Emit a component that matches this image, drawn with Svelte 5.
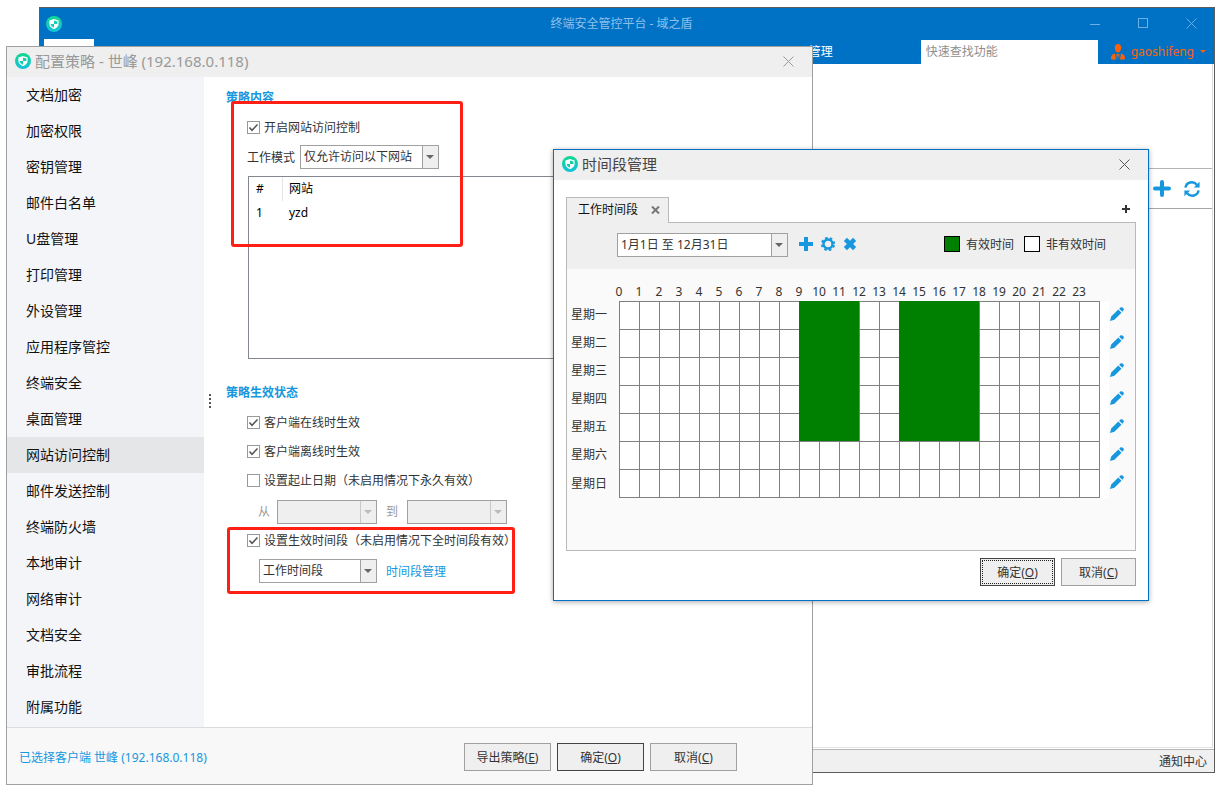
<script>
  const menu = [
    '文档加密', '加密权限', '密钥管理', '邮件白名单', 'U盘管理', '打印管理',
    '外设管理', '应用程序管控', '终端安全', '桌面管理', '网站访问控制', '邮件发送控制',
    '终端防火墙', '本地审计', '网络审计', '文档安全', '审批流程', '附属功能'
  ];
  const hours = Array.from({ length: 24 }, (_, i) => i);
  const workday = (h) => (h >= 9 && h < 12) || (h >= 14 && h < 18);

  let active = $state('网站访问控制');
  let control = $state(true);
  let online = $state(true);
  let offline = $state(true);
  let useDates = $state(false);
  let usePeriod = $state(true);
  let search = $state('');

  let week = $state(
    ['一', '二', '三', '四', '五', '六', '日'].map((d, i) => ({
      name: '星期' + d,
      slots: hours.map((h) => i < 5 && workday(h))
    }))
  );
</script>

{#snippet logo()}
  <svg class="logo" viewBox="0 0 16 16" aria-hidden="true">
    <defs>
      <linearGradient id="teal" x1="0" y1="0" x2="0" y2="1">
        <stop offset="0" stop-color="#14d88e" />
        <stop offset="1" stop-color="#12c2dc" />
      </linearGradient>
    </defs>
    <circle cx="8" cy="8" r="8" fill="url(#teal)" />
    <path d="M8 3 L12.6 4.6 V8 C12.6 10.4 10.6 12.2 8 13.2 C5.4 12.2 3.4 10.4 3.4 8 V4.6 Z" fill="#fff" />
    <path d="M8 4.4 L11.4 5.5 V8 H8 Z M8 8 V11.8 C6 11 4.8 9.8 4.6 8 Z" fill="#14cdb2" />
  </svg>
{/snippet}

{#snippet cross()}
  <svg class="cross" viewBox="0 0 11 11" aria-hidden="true">
    <path d="M0.5 0.5 L10.5 10.5 M10.5 0.5 L0.5 10.5" fill="none" stroke="currentColor" />
  </svg>
{/snippet}

{#snippet tick()}
  <svg class="tick" viewBox="0 0 13 13" aria-hidden="true">
    <path d="M2.5 6.5 L5 9.3 L10.5 3.5" fill="none" stroke="#555" stroke-width="1.5" />
  </svg>
{/snippet}

<div class="desktop">
  <div class="window main">
    <header class="banner">
      <div class="caption">
        {@render logo()}
        <h1>终端安全管控平台 - 域之盾</h1>
        <div class="controls">
          <button aria-label="最小化"><svg viewBox="0 0 11 11"><path d="M0 6.5 H10" stroke="currentColor" /></svg></button>
          <button aria-label="最大化"><svg viewBox="0 0 11 11"><rect x="0.5" y="0.5" width="9" height="9" fill="none" stroke="currentColor" /></svg></button>
          <button aria-label="关闭">{@render cross()}</button>
        </div>
      </div>
      <div class="ribbon">
        <span class="ribbon-tab"></span>
        <a class="nav" href="#manage">管理</a>
        <input class="search" type="text" placeholder="快速查找功能" aria-label="快速查找功能" bind:value={search} />
        <button class="user">
          <svg class="person" viewBox="0 0 14 16" aria-hidden="true">
            <path d="M7 0 C9.3 0 10.4 1.7 10.2 4 C10 6.7 8.6 8.6 7 8.6 C5.4 8.6 4 6.7 3.8 4 C3.6 1.7 4.7 0 7 0 Z" fill="currentColor" />
            <path d="M4 9.4 L5 15.6 H1.4 C0.4 15.6 0 15 0 14 C0 11.4 1.5 10 4 9.4 Z M10 9.4 C12.5 10 14 11.4 14 14 C14 15 13.6 15.6 12.6 15.6 H9 Z M5.4 10 L6.6 11 L6 15.6 Z M8.6 10 L7.4 11 L8 15.6 Z M5.4 10 H8.6 L7.4 11.6 H6.6 Z" fill="currentColor" />
          </svg>
          gaoshifeng
          <span class="caret"></span>
        </button>
      </div>
    </header>
    <div class="workspace">
      <div class="tools">
        <button aria-label="添加">
          <svg class="big" viewBox="0 0 18 18"><path d="M9 2 V15 M2 8.5 H16" stroke="currentColor" stroke-width="4" stroke-linecap="round" /></svg>
        </button>
        <button aria-label="刷新">
          <svg class="mid" viewBox="0 0 16 16">
            <path d="M1.4 6.6 A6.4 6.4 0 0 1 12.8 3.8 M14.6 9.4 A6.4 6.4 0 0 1 3.2 12.2" fill="none" stroke="currentColor" stroke-width="2.4" />
            <path d="M15.6 0.8 V6.6 H9.8 Z M0.4 15.2 V9.4 H6.2 Z" fill="currentColor" />
          </svg>
        </button>
      </div>
    </div>
    <footer class="status">通知中心</footer>
  </div>

  <section class="window policy" aria-labelledby="policy-title">
    <header class="titlebar faded">
      {@render logo()}
      <h2 id="policy-title">配置策略 - 世峰 (192.168.0.118)</h2>
      <button class="close" aria-label="关闭">{@render cross()}</button>
    </header>
    <div class="policy-body">
      <nav class="menu">
        {#each menu as item}
          <button class:active={item === active} onclick={() => (active = item)}>{item}</button>
        {/each}
      </nav>
      <div class="splitter"><i></i><i></i><i></i><i></i></div>
      <div class="settings">
        <h3>策略内容</h3>
        <div class="group">
          <label class="check">
            <input type="checkbox" bind:checked={control} />{@render tick()}开启网站访问控制
          </label>
          <div class="line mode">
            <label for="mode">工作模式</label>
            <span class="combo wide">
              <select id="mode"><option>仅允许访问以下网站</option></select>
            </span>
          </div>
          <div class="sites">
            <table>
              <thead>
                <tr><th>#</th><th>网站</th></tr>
              </thead>
              <tbody>
                <tr><td>1</td><td>yzd</td></tr>
              </tbody>
            </table>
          </div>
        </div>

        <h3>策略生效状态</h3>
        <div class="group">
          <label class="check">
            <input type="checkbox" bind:checked={online} />{@render tick()}客户端在线时生效
          </label>
          <label class="check">
            <input type="checkbox" bind:checked={offline} />{@render tick()}客户端离线时生效
          </label>
          <label class="check">
            <input type="checkbox" bind:checked={useDates} />{@render tick()}设置起止日期（未启用情况下永久有效）
          </label>
          <div class="line dates">
            <label for="from">从</label>
            <span class="combo date off"><select id="from" disabled={!useDates}></select></span>
            <label for="to">到</label>
            <span class="combo date off"><select id="to" disabled={!useDates}></select></span>
          </div>
          <label class="check">
            <input type="checkbox" bind:checked={usePeriod} />{@render tick()}设置生效时间段（未启用情况下全时间段有效）
          </label>
          <div class="line period">
            <span class="combo slot">
              <select aria-label="生效时间段"><option>工作时间段</option></select>
            </span>
            <a href="#period">时间段管理</a>
          </div>
        </div>
        <div class="mark mark-sites"></div>
        <div class="mark mark-period"></div>
      </div>
    </div>
    <footer class="policy-foot">
      <span>已选择客户端 世峰 (192.168.0.118)</span>
      <div class="buttons">
        <button class="btn">导出策略(<u>E</u>)</button>
        <button class="btn default">确定(<u>O</u>)</button>
        <button class="btn">取消(<u>C</u>)</button>
      </div>
    </footer>
  </section>

  <section class="window period-dialog" aria-labelledby="period-title">
    <header class="titlebar">
      {@render logo()}
      <h2 id="period-title">时间段管理</h2>
      <button class="close" aria-label="关闭">{@render cross()}</button>
    </header>
    <div class="period-body">
      <div class="tabs">
        <div class="tab">
          工作时间段
          <button aria-label="关闭标签">
            <svg class="tab-x" viewBox="0 0 9 8"><path d="M1 0.5 L8 7.5 M8 0.5 L1 7.5" stroke="currentColor" stroke-width="2" /></svg>
          </button>
        </div>
        <button class="add-tab" aria-label="添加标签">
          <svg viewBox="0 0 8 8"><path d="M4 0 V8 M0 4 H8" stroke="currentColor" stroke-width="2" /></svg>
        </button>
      </div>
      <div class="panel">
        <div class="panel-tools">
          <span class="combo range">
            <select aria-label="日期范围"><option>1月1日 至 12月31日</option></select>
          </span>
          <button aria-label="添加">
            <svg viewBox="0 0 14 14"><path d="M7 0 V14 M0 7 H14" stroke="currentColor" stroke-width="4" /></svg>
          </button>
          <button aria-label="设置">
            <svg viewBox="0 0 14 14">
              <circle cx="7" cy="7" r="4.5" fill="none" stroke="currentColor" stroke-width="2.4" />
              <circle cx="7" cy="7" r="6.2" fill="none" stroke="currentColor" stroke-width="1.8" stroke-dasharray="2.6 2.27" stroke-dashoffset="-1.13" />
            </svg>
          </button>
          <button aria-label="删除">
            <svg viewBox="0 0 14 14"><path d="M2.4 2.4 L11.6 11.6 M11.6 2.4 L2.4 11.6" stroke="currentColor" stroke-width="4.4" /></svg>
          </button>
          <div class="legend">
            <span class="swatch valid"></span>有效时间
            <span class="swatch"></span>非有效时间
          </div>
        </div>
        <table class="schedule">
          <thead>
            <tr>
              <td></td>
              {#each hours as h}
                <th scope="col"><span>{h}</span></th>
              {/each}
            </tr>
          </thead>
          <tbody>
            {#each week as day}
              <tr>
                <th scope="row">{day.name}</th>
                {#each day.slots as on}
                  <td class="cell" class:on></td>
                {/each}
                <td class="edge"></td>
                <td class="edit">
                  <button aria-label={'编辑' + day.name}>
                    <svg viewBox="0 0 14 14">
                      <path d="M0 14 L1.2 9.6 L8.3 2.6 L11.5 5.8 L4.4 12.8 Z M9.2 1.8 L10.4 0.6 C11.2 -0.1 12.2 0 13.1 0.9 C14 1.8 14.1 2.8 13.4 3.6 L12.3 4.8 Z" fill="currentColor" />
                    </svg>
                  </button>
                </td>
              </tr>
            {/each}
          </tbody>
        </table>
      </div>
      <div class="buttons">
        <button class="btn small default focused">确定(<u>O</u>)</button>
        <button class="btn small">取消(<u>C</u>)</button>
      </div>
    </div>
  </section>
</div>

<style>
  :global(body) {
    background: #fff;
  }

  .desktop {
    position: relative;
    min-height: 100vh;
    overflow: hidden;
    font: 12px/18px "Noto Sans", "Noto Sans CJK SC", sans-serif;
    color: #333;
  }

  .desktop :global(*) {
    box-sizing: border-box;
  }

  h1,
  h2,
  h3 {
    margin: 0;
    font-weight: normal;
  }

  button,
  input,
  select {
    font: inherit;
    color: inherit;
  }

  button {
    padding: 0;
    border: 0;
    background: none;
  }

  svg {
    display: block;
  }

  .window {
    position: absolute;
    display: flex;
    flex-direction: column;
    background: #fff;
  }

  .logo {
    width: 16px;
    height: 16px;
    flex: none;
  }

  .cross {
    width: 11px;
    height: 11px;
  }

  /* main window */
  .main {
    inset: 7px 9px 18px 39px;
    border: 1px solid #5c5c5c;
  }

  .banner {
    background: #0072c6;
  }

  .caption {
    display: grid;
    grid-template-columns: 1fr auto 1fr;
    align-items: center;
    height: 31px;
    padding: 0 17px 0 6px;
  }

  .caption h1 {
    font-size: 12px;
    color: #8cc0ea;
  }

  .controls {
    display: flex;
    justify-content: flex-end;
    gap: 37px;
    color: #6cafe4;
  }

  .controls svg {
    width: 11px;
    height: 11px;
  }

  .ribbon {
    display: flex;
    height: 25px;
    padding-left: 4px;
  }

  .ribbon-tab {
    width: 50px;
    background: #fff;
  }

  .nav {
    margin-left: auto;
    margin-right: 88px;
    line-height: 26px;
    color: #fff;
    text-decoration: none;
  }

  .search {
    width: 177px;
    margin-top: 1px;
    padding: 0 5px;
    border: 0;
    border-radius: 0;
    background: #fff;
  }

  .search::placeholder {
    color: #8f8f8f;
  }

  .user {
    display: flex;
    align-items: center;
    gap: 6px;
    padding: 0 8px 0 13px;
    color: #f7630c;
  }

  .person {
    width: 14px;
    height: 16px;
  }

  .caret {
    border: 3px solid transparent;
    border-top-color: currentColor;
    border-bottom: 0;
  }

  .workspace {
    flex: 1;
    margin: 0 1px 1px 0;
    padding-top: 104px;
    border-right: 1px solid #d8dadc;
    border-bottom: 1px solid #e2e2e2;
  }

  .tools {
    display: flex;
    justify-content: flex-end;
    align-items: center;
    gap: 13px;
    height: 41px;
    padding-right: 12px;
    border-top: 1px solid #b4b4b4;
    border-bottom: 1px solid #a6a6a6;
    color: #1697de;
  }

  .big {
    width: 18px;
    height: 18px;
  }

  .mid {
    width: 16px;
    height: 16px;
  }

  .status {
    height: 23px;
    padding: 3px 7px 0;
    border-top: 1px solid #b4b4b4;
    background: #f0f0f0;
    text-align: right;
  }

  /* shared dialog parts */
  .titlebar {
    display: flex;
    align-items: center;
    gap: 4px;
    height: 30px;
    padding: 0 18px 2px 8px;
    background: #efefef;
  }

  .titlebar h2 {
    font-size: 15px;
    color: #444;
  }

  .faded h2,
  .faded .close {
    color: #999;
  }

  .close {
    margin-left: auto;
    color: #555;
  }

  .combo {
    position: relative;
    display: inline-flex;
    height: 24px;
  }

  .combo select {
    width: 100%;
    padding: 0 20px 0 3px;
    border: 1px solid #a0a0a0;
    border-radius: 0;
    background: linear-gradient(#a0a0a0, #a0a0a0) right 15px top / 1px 100% no-repeat,
      linear-gradient(#efefef, #efefef) right top / 15px 100% no-repeat, #fff;
    appearance: none;
    opacity: 1;
  }

  .combo::after {
    content: "";
    position: absolute;
    right: 5px;
    top: 10px;
    border: 4px solid transparent;
    border-top-color: #666;
    border-bottom: 0;
    pointer-events: none;
  }

  .combo.off select {
    background: linear-gradient(#c8c8c8, #c8c8c8) right 15px top / 1px 100% no-repeat, #efefef;
  }

  .combo.off::after {
    border-top-color: #bbb;
  }

  .wide {
    width: 139px;
  }

  .date {
    width: 100px;
  }

  .slot {
    width: 118px;
  }

  .range {
    width: 171px;
  }

  .buttons {
    display: flex;
    gap: 6px;
  }

  .btn {
    width: 87px;
    height: 28px;
    padding-top: 1px;
    border: 1px solid #a0a0a0;
    background: #efefef;
  }

  .btn.small {
    width: 75px;
  }

  .btn.default {
    border-color: #444;
  }

  .btn.focused {
    outline: 1px dotted #222;
    outline-offset: -3px;
  }

  /* policy dialog */
  .policy {
    inset: 46px 411px auto 6px;
    border: 1px solid #a0a0a0;
  }

  .policy-body {
    display: flex;
  }

  .menu {
    display: flex;
    flex-direction: column;
    width: 197px;
    padding-bottom: 2px;
    background: #f4f5f8;
  }

  .menu button {
    height: 36px;
    padding-left: 19px;
    font-size: 14px;
    text-align: left;
    color: #111;
  }

  .menu .active {
    background: #e5e6e8;
  }

  .splitter {
    display: flex;
    flex-direction: column;
    justify-content: center;
    align-items: center;
    gap: 2px;
    width: 12px;
    padding-bottom: 2px;
  }

  .splitter i {
    width: 2px;
    height: 2px;
    background: #555;
  }

  .settings {
    position: relative;
    flex: 1;
    padding: 12px 24px 0 10px;
  }

  .settings h3 {
    font-size: 12px;
    font-weight: bold;
    color: #1697de;
  }

  .group {
    margin-bottom: 24px;
    padding: 14px 0 0 21px;
  }

  .group + h3 {
    padding-top: 1px;
  }

  .check {
    position: relative;
    display: flex;
    align-items: center;
    gap: 4px;
    height: 13px;
    white-space: nowrap;
  }

  .check + .check {
    margin-top: 16px;
  }

  .check input {
    width: 13px;
    height: 13px;
    margin: 0;
    border: 1px solid #999;
    background: #fff;
    appearance: none;
  }

  .tick {
    position: absolute;
    left: 0;
    top: 0;
    width: 13px;
    height: 13px;
    pointer-events: none;
  }

  input:not(:checked) + .tick {
    display: none;
  }

  .line {
    display: flex;
    align-items: center;
  }

  .mode {
    gap: 5px;
    margin-top: 11px;
  }

  .dates {
    margin: 13px 0 10px;
    padding-left: 11px;
    color: #999;
  }

  .dates .combo {
    margin: 0 9px 0 7px;
  }

  .dates label + .combo:last-child {
    margin-left: 9px;
  }

  .period {
    gap: 9px;
    margin-top: 12px;
    padding-left: 12px;
  }

  .mode label,
  .period a {
    padding-top: 2px;
  }

  a {
    color: #1697de;
    text-decoration: none;
  }

  .sites {
    height: 183px;
    margin: 7px 0 0 1px;
    border: 1px solid #828790;
  }

  .sites table {
    width: 100%;
    border-spacing: 0;
    color: #000;
  }

  .sites th,
  .sites td {
    height: 24px;
    padding: 0 6px;
    font-weight: normal;
    text-align: left;
  }

  .sites th:first-child,
  .sites td:first-child {
    width: 34px;
    padding-left: 7px;
  }

  .sites th:first-child {
    border-right: 1px solid #e5e5e5;
  }

  .mark {
    position: absolute;
    border: 3px solid #ff1f14;
    border-radius: 3px;
    pointer-events: none;
  }

  .mark-sites {
    left: 15px;
    top: 24px;
    width: 232px;
    height: 146px;
  }

  .mark-period {
    left: 11px;
    top: 450px;
    width: 288px;
    height: 67px;
  }

  .policy-foot {
    display: flex;
    justify-content: space-between;
    align-items: center;
    height: 57px;
    padding: 2px 75px 0 12px;
    border-top: 1px solid #dcdcdc;
    background: #f8f8f8;
  }

  .policy-foot > span {
    padding-top: 2px;
    color: #1697de;
  }

  /* time period dialog */
  .period-dialog {
    inset: 149px 75px auto 553px;
    border: 1px solid #0072c6;
    box-shadow: 0 1px 5px rgba(0, 0, 0, 0.35);
  }

  .period-body {
    padding: 17px 12px 14px;
  }

  .tabs {
    display: flex;
    justify-content: space-between;
    align-items: center;
  }

  .tab {
    display: flex;
    align-items: center;
    gap: 13px;
    height: 26px;
    margin-bottom: -1px;
    padding: 0 8px 1px 11px;
    border: 1px solid #b9b9b9;
    border-bottom: 0;
    background: #efefef;
    color: #111;
    z-index: 1;
  }

  .tab-x {
    width: 9px;
    height: 8px;
    color: #777;
  }

  .add-tab {
    margin-right: 6px;
    padding-bottom: 1px;
  }

  .add-tab svg {
    width: 8px;
    height: 8px;
  }

  .panel {
    min-height: 329px;
    margin-bottom: 7px;
    border: 1px solid #b9b9b9;
    background: #fafafa;
  }

  .panel-tools {
    display: flex;
    align-items: center;
    gap: 8px;
    height: 46px;
    padding: 0 29px 2px 50px;
    background: #efefef;
  }

  .panel-tools .combo {
    margin-right: 3px;
  }

  .panel-tools button {
    padding-bottom: 2px;
    color: #1697de;
  }

  .panel-tools svg,
  .edit svg {
    width: 14px;
    height: 14px;
  }

  .legend {
    display: flex;
    align-items: center;
    gap: 6px;
    margin-left: auto;
  }

  .swatch {
    width: 16px;
    height: 16px;
    margin-bottom: 2px;
    border: 1px solid #000;
    background: #fff;
  }

  .swatch + .swatch {
    margin-left: 4px;
  }

  .swatch.valid {
    background: #008000;
  }

  .schedule {
    margin-top: 14px;
    border-spacing: 0;
  }

  .schedule th,
  .schedule td {
    padding: 0;
    font-weight: normal;
  }

  .schedule thead th {
    height: 18px;
  }

  .schedule thead span {
    display: block;
    width: 20px;
    margin-left: -10px;
    text-align: center;
  }

  .schedule tbody th {
    min-width: 52px;
    height: 28px;
    padding-left: 4px;
    text-align: left;
  }

  .schedule tbody tr:last-child th {
    height: 29px;
  }

  .schedule .cell {
    min-width: 20px;
    border-top: 1px solid #808080;
    border-left: 1px solid #808080;
    background: #fff;
  }

  .schedule tr:last-child .cell {
    border-bottom: 1px solid #808080;
  }

  .schedule .cell.on {
    border-color: #008000;
    background: #008000;
  }

  .schedule .edge {
    min-width: 10px;
    border-left: 1px solid #808080;
    background: #fff;
  }

  .schedule .edit {
    padding: 2px 0 0 1px;
    color: #1697de;
  }

  .period-body .buttons {
    justify-content: flex-end;
  }
</style>
